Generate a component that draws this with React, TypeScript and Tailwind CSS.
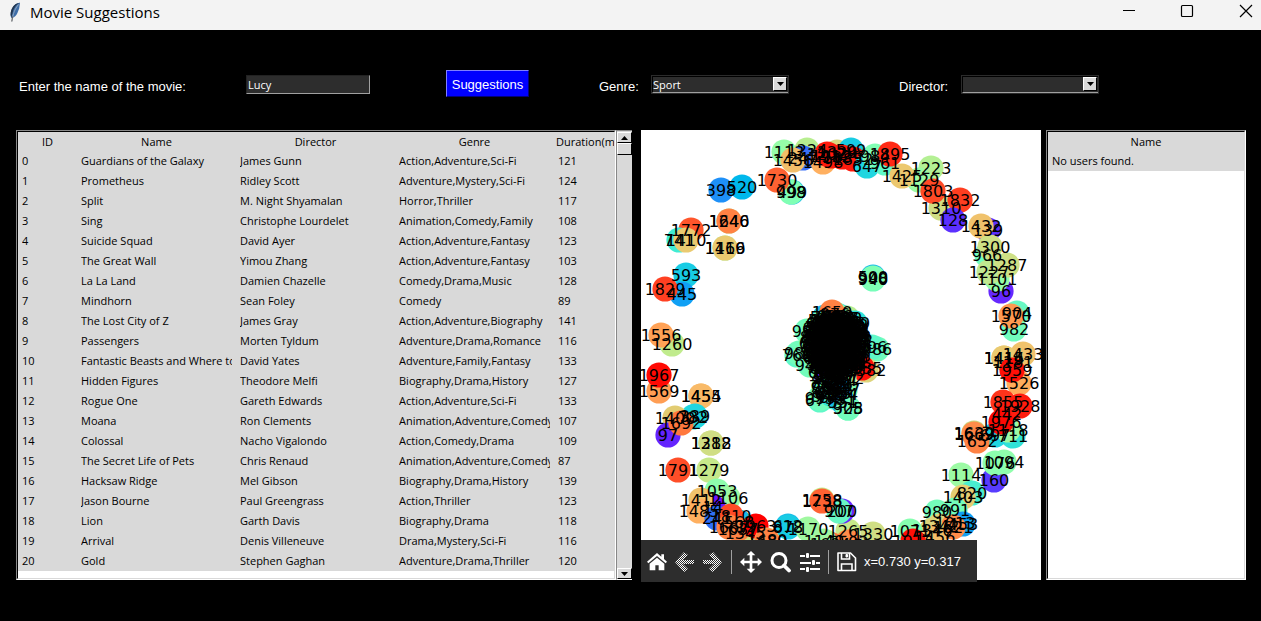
import React from "react";

type GraphNode = [label: string, x: number, y: number, color: string];

const movies: string[][] = [
  ["0", "Guardians of the Galaxy", "James Gunn", "Action,Adventure,Sci-Fi", "121"],
  ["1", "Prometheus", "Ridley Scott", "Adventure,Mystery,Sci-Fi", "124"],
  ["2", "Split", "M. Night Shyamalan", "Horror,Thriller", "117"],
  ["3", "Sing", "Christophe Lourdelet", "Animation,Comedy,Family", "108"],
  ["4", "Suicide Squad", "David Ayer", "Action,Adventure,Fantasy", "123"],
  ["5", "The Great Wall", "Yimou Zhang", "Action,Adventure,Fantasy", "103"],
  ["6", "La La Land", "Damien Chazelle", "Comedy,Drama,Music", "128"],
  ["7", "Mindhorn", "Sean Foley", "Comedy", "89"],
  ["8", "The Lost City of Z", "James Gray", "Action,Adventure,Biography", "141"],
  ["9", "Passengers", "Morten Tyldum", "Adventure,Drama,Romance", "116"],
  ["10", "Fantastic Beasts and Where to Find Them", "David Yates", "Adventure,Family,Fantasy", "133"],
  ["11", "Hidden Figures", "Theodore Melfi", "Biography,Drama,History", "127"],
  ["12", "Rogue One", "Gareth Edwards", "Action,Adventure,Sci-Fi", "133"],
  ["13", "Moana", "Ron Clements", "Animation,Adventure,Comedy", "107"],
  ["14", "Colossal", "Nacho Vigalondo", "Action,Comedy,Drama", "109"],
  ["15", "The Secret Life of Pets", "Chris Renaud", "Animation,Adventure,Comedy", "87"],
  ["16", "Hacksaw Ridge", "Mel Gibson", "Biography,Drama,History", "139"],
  ["17", "Jason Bourne", "Paul Greengrass", "Action,Thriller", "123"],
  ["18", "Lion", "Garth Davis", "Biography,Drama", "118"],
  ["19", "Arrival", "Denis Villeneuve", "Drama,Mystery,Sci-Fi", "116"],
  ["20", "Gold", "Stephen Gaghan", "Adventure,Drama,Thriller", "120"],
];

const outerNodes: GraphNode[] = [
  ["398", 80, 60, "#1e90f8"],
  ["520", 101, 57, "#00b8ec"],
  ["499", 151, 62, "#20c0e8"],
  ["998", 150, 62, "#80ffb4"],
  ["1730", 136, 50, "#ff6232"],
  ["1113", 143, 22, "#96fca8"],
  ["1224", 166, 20, "#b8ee90"],
  ["247", 162, 28, "#3a70f8"],
  ["1456", 152, 30, "#f2be6a"],
  ["1329", 196, 22, "#d8d880"],
  ["1498", 182, 32, "#ffb060"],
  ["1912", 190, 26, "#ff1a0c"],
  ["1202", 186, 24, "#ff1a0c"],
  ["599", 210, 20, "#18cce4"],
  ["1839", 201, 27, "#ff1a0c"],
  ["1852", 212, 29, "#ff1a0c"],
  ["647", 226, 36, "#20d6e0"],
  ["984", 234, 26, "#80ffb4"],
  ["961", 244, 33, "#60f8c8"],
  ["1895", 249, 24, "#ff2a16"],
  ["1223", 290, 38, "#b4f094"],
  ["1129", 278, 50, "#9cfaa4"],
  ["1425", 261, 46, "#ecc86f"],
  ["1310", 300, 78, "#d0de84"],
  ["1803", 292, 61, "#ff4a26"],
  ["1832", 319, 70, "#ff3e20"],
  ["128", 312, 90, "#5c30ff"],
  ["139", 347, 100, "#5c30ff"],
  ["1432", 340, 96, "#f0c26c"],
  ["966", 346, 125, "#72fcbc"],
  ["96", 360, 161, "#6628fe"],
  ["1101", 356, 149, "#96fca8"],
  ["1300", 349, 117, "#cee085"],
  ["1227", 348, 142, "#c0e890"],
  ["1287", 366, 135, "#cee085"],
  ["500", 232, 147, "#18bce8"],
  ["940", 232, 149, "#72fcbc"],
  ["998", 232, 148, "#80ffb4"],
  ["904", 376, 183, "#68f8c4"],
  ["982", 373, 199, "#72fcbc"],
  ["1570", 370, 186, "#ff9a52"],
  ["1181", 372, 232, "#a0f8a0"],
  ["1433", 382, 224, "#f0c26c"],
  ["1415", 363, 228, "#eaca70"],
  ["1414", 363, 228, "#eaca70"],
  ["1526", 378, 253, "#ffac5c"],
  ["1959", 371, 240, "#ff1008"],
  ["1855", 362, 272, "#ff341b"],
  ["1928", 379, 276, "#ff1c0e"],
  ["442", 366, 284, "#ff1c0e"],
  ["711", 372, 306, "#30e2d8"],
  ["697", 354, 305, "#20d6e0"],
  ["1118", 367, 300, "#9cfaa4"],
  ["1976", 360, 292, "#ff0a04"],
  ["1639", 333, 303, "#c6d880"],
  ["1669", 333, 304, "#ff8c4a"],
  ["1652", 336, 311, "#ff8244"],
  ["1114", 320, 345, "#9cfaa4"],
  ["160", 353, 350, "#583cff"],
  ["1094", 363, 332, "#90feac"],
  ["1076", 354, 333, "#8cffae"],
  ["820", 331, 363, "#48eed0"],
  ["1403", 322, 367, "#e6cc72"],
  ["1013", 314, 393, "#90feac"],
  ["991", 314, 380, "#74fdba"],
  ["980", 296, 382, "#74fdba"],
  ["453", 322, 394, "#10a0f4"],
  ["1342", 298, 396, "#ddd47c"],
  ["1621", 312, 397, "#ff8c4a"],
  ["1346", 291, 400, "#ddd47c"],
  ["1456", 294, 407, "#f2be6a"],
  ["1071", 269, 401, "#86ffb0"],
  ["1913", 272, 411, "#ff1008"],
  ["1330", 232, 404, "#d0de84"],
  ["1265", 207, 401, "#c6e88a"],
  ["1503", 207, 412, "#ff8c4a"],
  ["1604", 189, 414, "#ff783e"],
  ["200", 201, 381, "#6628fe"],
  ["907", 198, 381, "#68f8c4"],
  ["1258", 181, 370, "#c6e88a"],
  ["1738", 181, 371, "#ff6232"],
  ["1772", 50, 100, "#ff562c"],
  ["741", 38, 110, "#40ecd4"],
  ["1410", 45, 110, "#eaca70"],
  ["1246", 88, 91, "#b8ee90"],
  ["1640", 88, 91, "#ff8244"],
  ["1169", 84, 118, "#a0f8a0"],
  ["1416", 84, 118, "#eaca70"],
  ["593", 45, 145, "#18cce4"],
  ["445", 41, 164, "#10a0f4"],
  ["1829", 24, 159, "#ff4022"],
  ["1260", 31, 214, "#c0eb8d"],
  ["1556", 20, 205, "#ffa256"],
  ["1569", 18, 261, "#ff9e54"],
  ["1967", 18, 245, "#ff0a04"],
  ["1454", 60, 266, "#f8ba68"],
  ["1455", 60, 266, "#f8ba68"],
  ["782", 52, 287, "#30e2d8"],
  ["339", 54, 286, "#20d6e0"],
  ["1400", 34, 288, "#e2cc72"],
  ["97", 27, 305, "#6424fe"],
  ["1692", 40, 293, "#ff783e"],
  ["1288", 70, 313, "#d0de84"],
  ["1312", 70, 313, "#d0de84"],
  ["1791", 37, 340, "#ff4e28"],
  ["1279", 68, 340, "#c6e88a"],
  ["1053", 76, 361, "#8efead"],
  ["1106", 87, 368, "#9cfaa4"],
  ["14", 72, 377, "#7010ff"],
  ["1412", 60, 370, "#f0c26c"],
  ["1485", 58, 381, "#ffb060"],
  ["241", 76, 388, "#3070f8"],
  ["568", 98, 392, "#18bce8"],
  ["1810", 90, 386, "#ff4a26"],
  ["1345", 104, 403, "#d2dc84"],
  ["1667", 88, 397, "#ff8244"],
  ["1637", 97, 399, "#ff8244"],
  ["1963", 115, 396, "#ff0000"],
  ["612", 147, 396, "#18bce8"],
  ["878", 147, 397, "#18cce4"],
  ["1170", 167, 399, "#a0f8a0"],
  ["1480", 126, 410, "#ffb060"],
  ["1689", 126, 411, "#ff8244"],
  ["1149", 183, 411, "#a0f8a0"],
];

const coreRimNodes: GraphNode[] = [
  ["552", 184, 187, "#18bce8"],
  ["1659", 191, 182, "#ff8244"],
  ["691", 180, 193, "#68f8c4"],
  ["991", 166, 201, "#72fcbc"],
  ["768", 156, 225, "#60f8c8"],
  ["988", 158, 223, "#72fcbc"],
  ["941", 169, 235, "#72fcbc"],
  ["829", 214, 193, "#30e2d8"],
  ["909", 211, 199, "#60f8c8"],
  ["986", 236, 219, "#72fcbc"],
  ["896", 231, 217, "#60f8c8"],
  ["1382", 225, 240, "#ddd47c"],
  ["1935", 221, 238, "#ff1008"],
  ["120", 186, 248, "#6628fe"],
  ["1272", 203, 248, "#b8ee90"],
  ["414", 196, 258, "#10a0f4"],
  ["677", 179, 270, "#60f8c8"],
  ["993", 179, 268, "#72fcbc"],
  ["631", 190, 264, "#30e2d8"],
  ["551", 202, 272, "#18bce8"],
  ["908", 207, 278, "#72fcbc"],
  ["325", 207, 278, "#72fcbc"],
  ["904", 185, 258, "#60f8c8"],
];

const rimColors = ["#60f8c8", "#72fcbc", "#30e2d8", "#18bce8", "#80ffb4", "#b8ee90"];

// Golden-angle spiral that fills the dense middle of the graph.
const coreNodes: GraphNode[] = Array.from({ length: 220 }, (_, i) => {
  const radius = Math.sqrt(i / 220) * 30;
  const angle = i * 2.39996;
  return [
    String(500 + ((i * 137) % 499)),
    Math.round(195 + radius * 0.75 * Math.cos(angle)),
    Math.round(214 + radius * Math.sin(angle)),
    rimColors[i % rimColors.length],
  ];
});

const tailNodes: GraphNode[] = Array.from({ length: 20 }, (_, i) => [
  String(600 + ((i * 89) % 390)),
  182 + ((i * 7) % 23),
  242 + Math.round(i * 1.4),
  rimColors[i % rimColors.length],
]);

const nodes = [...coreNodes, ...tailNodes, ...coreRimNodes, ...outerNodes];

function NetworkGraph() {
  return (
    <svg viewBox="0 0 400 450" className="block h-[450px] w-full bg-white" role="img" aria-label="Movie network graph">
      {nodes.map(([, x, y, color], i) => (
        <circle key={i} cx={x} cy={y} r="12.6" fill={color} />
      ))}
      <g fontFamily="'DejaVu Sans', sans-serif" fontSize="16" textAnchor="middle" fill="#000">
        {nodes.map(([label, x, y], i) => (
          <text key={i} x={x} y={y + 6}>
            {label}
          </text>
        ))}
      </g>
    </svg>
  );
}

function Feather() {
  return (
    <svg viewBox="0 0 12 20" className="h-5 w-3" aria-hidden="true">
      <path d="M11 .8C7 1 3.800 4 2.200 8.500 1.500 11 1.300 13.500 2.300 16L4.500 15.500C7 14 8.500 11.500 9 9.500L10.200 6.500Z" fill="#3f6ea8" />
      <path d="M10.800.8C8 2 5 5.500 3.800 10L2.300 15.500 1.600 13C1.500 7 5 1.500 10.800.8Z" fill="#23364f" />
      <path d="M9.500 2.500C6 7 4 11 3 19.500" fill="none" stroke="#a9b6c4" strokeWidth="0.8" />
      <path d="M3.500 14.500 2.800 19.500" stroke="#555" strokeWidth="1" />
    </svg>
  );
}

function WindowControls() {
  return (
    <div className="flex gap-[39px] pt-px">
      <button aria-label="Minimize" className="h-5 w-5">
        <svg viewBox="0 0 20 20" className="size-5" stroke="#000" strokeWidth="1"><path d="M5 8.500H17" /></svg>
      </button>
      <button aria-label="Maximize" className="h-5 w-5">
        <svg viewBox="0 0 20 20" className="size-5" fill="none" stroke="#000" strokeWidth="1.200"><rect x="4.500" y="3.500" width="11" height="11" rx="1" /></svg>
      </button>
      <button aria-label="Close" className="h-5 w-5">
        <svg viewBox="0 0 20 20" className="size-5" stroke="#000" strokeWidth="1.200"><path d="M4 3 16 15M16 3 4 15" /></svg>
      </button>
    </div>
  );
}

function Combo({ id, options }: { id: string; options: string[] }) {
  return (
    <div className="relative h-[19px] w-[138px] border border-[#2b2b2b] bg-[#2d2d2d]">
      <select
        id={id}
        className="block h-[17px] w-full appearance-none border-t border-l border-b border-t-black border-l-black border-b-[#a0a0a0] bg-[#2d2d2d] font-['Open_Sans',sans-serif] text-[11px] leading-[14px] text-white outline-none"
      >
        {options.map((o) => (
          <option key={o}>{o}</option>
        ))}
      </select>
      <span className="pointer-events-none absolute top-[1px] right-[1px] flex h-[14px] w-[14px] items-center justify-center border-t border-r border-b border-l border-t-white border-r-black border-b-black border-l-white bg-[#d9d9d9]">
        <svg viewBox="0 0 7 4" className="h-1 w-[7px]"><path d="M0 0H7L3.500 4Z" /></svg>
      </span>
    </div>
  );
}

const toolButton = "flex h-6 w-6 items-center justify-center";

function Toolbar() {
  return (
    <div className="absolute top-[410px] left-0 flex h-[42px] w-[336px] items-center bg-[#2d2d2d] pt-[2px] pl-1 text-white">
      <button aria-label="Home" className={toolButton}>
        <svg viewBox="0 0 60 54" className="h-[18px] w-5" fill="#fff">
          <path d="M30 0 0 26 4 31 30 9 56 31 60 26 51 18V4H43V11Z" />
          <path d="M8 32 30 14 52 32V52H35V37H25V52H8Z" />
        </svg>
      </button>
      <button aria-label="Back" className="ml-1 flex h-6 w-6 items-center justify-center">
        <svg viewBox="0 0 20 20" className="size-5">
          <defs>
            <pattern id="dither" width="2" height="2" patternUnits="userSpaceOnUse">
              <path d="M0 0H1V1H0ZM1 1H2V2H1Z" fill="#fff" shapeRendering="crispEdges" />
            </pattern>
          </defs>
          <path d="M0 10 9 0 13 3 8 8H19V12H8L13 17 9 20Z" fill="url(#dither)" />
        </svg>
      </button>
      <button aria-label="Forward" className="ml-1 flex h-6 w-6 items-center justify-center">
        <svg viewBox="0 0 20 20" className="size-5">
          <path d="M19 10 10 0 6 3 11 8H0V12H11L6 17 10 20Z" fill="url(#dither)" />
        </svg>
      </button>
      <span className="ml-[6px] h-6 w-px bg-[#a0a0a0]" />
      <button aria-label="Pan" className="ml-[7px] flex h-6 w-6 items-center justify-center">
        <svg viewBox="0 0 66 66" className="h-[22px] w-[22px]" fill="#fff">
          <path d="M33 0 46 13H37V29H53V20L66 33 53 46V37H37V53H46L33 66 20 53H29V37H13V46L0 33 13 20V29H29V13H20Z" />
        </svg>
      </button>
      <button aria-label="Zoom" className="ml-[6px] flex h-6 w-6 items-center justify-center">
        <svg viewBox="0 0 22 22" className="h-[22px] w-[22px]" fill="none" stroke="#fff">
          <circle cx="9" cy="9.500" r="7" strokeWidth="3" />
          <path d="M14 14.500 19 19.500" strokeWidth="3.800" strokeLinecap="round" />
        </svg>
      </button>
      <button aria-label="Configure subplots" className="ml-[5px] flex h-6 w-6 items-center justify-center">
        <svg viewBox="0 0 20 20" className="size-5" fill="#fff">
          <path d="M0 3H5V5H0ZM10 3H20V5H10ZM0 10H11V12H0ZM16 10H20V12H16ZM0 16H5V18H0ZM10 16H20V18H10Z" />
          <rect x="6" y="1" width="3" height="5" rx="1" />
          <rect x="12" y="8" width="3" height="5" rx="1" />
          <rect x="6" y="15" width="3" height="5" rx="1" />
        </svg>
      </button>
      <span className="ml-[6px] h-6 w-px bg-[#a0a0a0]" />
      <button aria-label="Save" className="ml-[6px] flex h-6 w-6 items-center justify-center">
        <svg viewBox="0 0 20 20" className="size-5" fill="none" stroke="#fff" strokeWidth="1.600">
          <path d="M1 1H13.500L18.500 6V18.500H1Z" strokeLinejoin="round" />
          <path d="M4.500 18.500V12H15V18.500M4.500 1V7H12.500V1" />
          <path d="M9 2.500H10.500V5H9Z" strokeWidth="1" fill="#fff" />
        </svg>
      </button>
      <output className="ml-[5px] text-[13px] leading-4 whitespace-nowrap">x=0.730 y=0.317</output>
    </div>
  );
}

const panel =
  "h-[450px] border-t border-l border-r border-b border-t-[#888] border-l-[#888] border-r-white border-b-white bg-white";
const panelInner =
  "h-full overflow-hidden border-t border-l border-r border-b border-t-black border-l-black border-r-[#d9d9d9] border-b-[#d9d9d9]";
const raised =
  "flex w-[15px] shrink-0 items-center justify-center border-t border-l border-r border-b border-t-white border-l-white border-r-black border-b-black bg-[#d9d9d9]";

export default function App() {
  return (
    <div className="min-h-screen overflow-hidden bg-black font-['Liberation_Sans',Arial,sans-serif] text-white">
      <header className="flex h-[30px] items-start justify-between bg-[#f3f3f3] pt-px pr-[5px] pl-[9px] text-black">
        <div className="flex items-center gap-[9px]">
          <Feather />
          <h1 className="font-['Open_Sans',sans-serif] text-[15px] leading-[22px]">Movie Suggestions</h1>
        </div>
        <WindowControls />
      </header>

      <form
        className="grid h-[100px] grid-cols-[227fr_200fr_153fr_300fr_362fr] items-start pt-10 pl-[19px] text-[13px]"
        onSubmit={(e) => e.preventDefault()}
      >
        <label htmlFor="movie" className="pt-[9px] leading-4 whitespace-nowrap">
          Enter the name of the movie:
        </label>
        <input
          id="movie"
          defaultValue="Lucy"
          className="mt-[5px] h-[19px] w-[124px] border-t border-r border-b border-l border-t-[#222] border-r-[#a0a0a0] border-b-[#a0a0a0] border-l-[#222] bg-[#2d2d2d] pl-[1px] font-['Open_Sans',sans-serif] text-[11px] outline-none"
        />
        <button className="h-[27px] w-[83px] border-t border-r border-b border-l border-t-[#7f7fff] border-r-[#00007f] border-b-[#00007f] border-l-[#7f7fff] bg-[#0000ff] pt-[2px] text-[13px] text-white">
          Suggestions
        </button>
        <div className="flex">
          <label htmlFor="genre" className="w-[52px] pt-[9px] leading-4">Genre:</label>
          <div className="pt-[5px]">
            <Combo id="genre" options={["Sport", "Action", "Comedy", "Drama"]} />
          </div>
        </div>
        <div className="flex">
          <label htmlFor="director" className="w-[62px] pt-[9px] leading-4">Director:</label>
          <div className="pt-[5px]">
            <Combo id="director" options={["", "James Gunn", "Ridley Scott"]} />
          </div>
        </div>
      </form>

      <main className="flex pr-[15px] pl-4">
        <section className="mr-[9px] flex min-w-0 flex-1 font-['Open_Sans',sans-serif] text-[11px] text-black">
          <div className={`${panel} min-w-0 flex-1`}>
            <div className={panelInner}>
              <table className="w-[695px] table-fixed border-collapse bg-[#d9d9d9]">
                <colgroup>
                  <col className="w-[59px]" />
                  <col className="w-[159px]" />
                  <col className="w-[159px]" />
                  <col className="w-[159px]" />
                  <col className="w-[159px]" />
                </colgroup>
                <thead>
                  <tr className="h-[19px]">
                    {["ID", "Name", "Director", "Genre"].map((h) => (
                      <th key={h} className="p-0 text-center leading-[19px] font-normal">{h}</th>
                    ))}
                    <th className="p-0 pl-[2px] text-left leading-[19px] font-normal">Duration(minutes)</th>
                  </tr>
                </thead>
                <tbody>
                  {movies.map((row) => (
                    <tr key={row[0]} className="h-5">
                      {row.map((cell, i) => (
                        <td key={i} className="px-1 py-0">
                          <div className="overflow-hidden leading-5 whitespace-nowrap">{cell}</div>
                        </td>
                      ))}
                    </tr>
                  ))}
                </tbody>
              </table>
            </div>
          </div>
          <div className="flex h-[450px] w-4 flex-col border-t border-b border-l border-t-[#888] border-b-white border-l-[#888] bg-[#d9d9d9] pt-px">
            <button aria-label="Scroll up" className={`${raised} h-[11px]`}>
              <svg viewBox="0 0 7 4" className="h-1 w-[7px]"><path d="M0 4H7L3.500 0Z" /></svg>
            </button>
            <div className={`${raised} h-3`} />
            <div className="flex-1" />
            <button aria-label="Scroll down" className={`${raised} h-[11px]`}>
              <svg viewBox="0 0 7 4" className="h-1 w-[7px]"><path d="M0 0H7L3.500 4Z" /></svg>
            </button>
          </div>
        </section>

        <section className="relative mr-[5px] h-[450px] w-[400px] shrink-0">
          <NetworkGraph />
          <Toolbar />
        </section>

        <section className="w-[200px] shrink-0 font-['Open_Sans',sans-serif] text-[11px] text-black">
          <div className={panel}>
            <div className={panelInner}>
              <table className="w-full border-collapse bg-[#d9d9d9]">
                <thead>
                  <tr className="h-[19px]">
                    <th className="p-0 text-center leading-[19px] font-normal">Name</th>
                  </tr>
                </thead>
                <tbody>
                  <tr className="h-5">
                    <td className="px-1 py-0 leading-5">No users found.</td>
                  </tr>
                </tbody>
              </table>
            </div>
          </div>
        </section>
      </main>
    </div>
  );
}
